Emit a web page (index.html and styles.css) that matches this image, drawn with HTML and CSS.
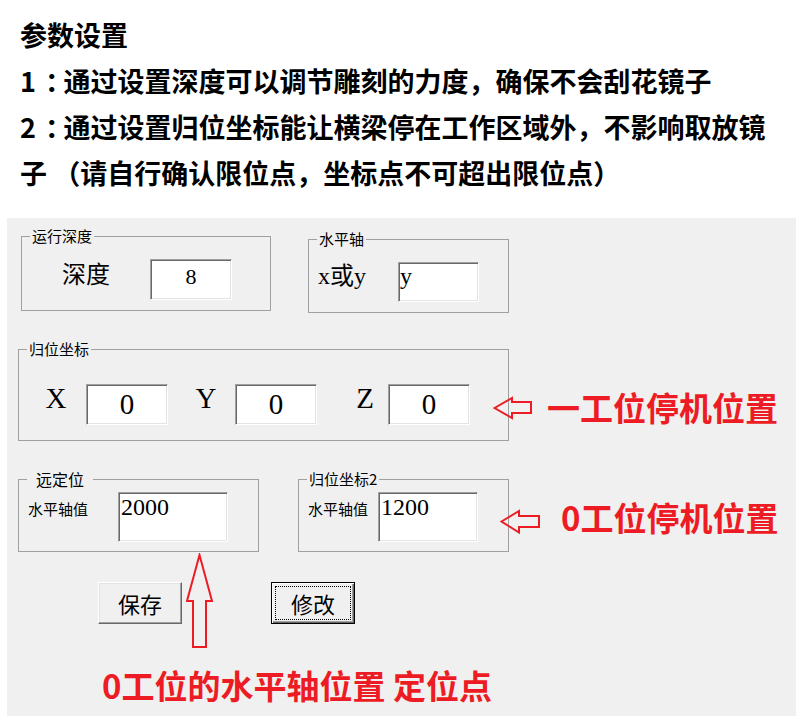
FILE: index.html
```html
<!DOCTYPE html>
<html lang="zh-CN">
<head>
<meta charset="utf-8">
<title>参数设置</title>
<link rel="stylesheet" href="styles.css">
</head>
<body>
<header class="intro">
  <h1 class="intro-line">参数设置</h1>
  <p class="intro-line">1<span class="punct">：</span>通过设置深度可以调节雕刻的力度，确保不会刮花镜子</p>
  <p class="intro-line">2<span class="punct">：</span>通过设置归位坐标能让横梁停在工作区域外，不影响取放镜<br>子 （请自行确认限位点，坐标点不可超出限位点）</p>
</header>

<main class="panel">
  <div class="row row-1">
    <fieldset class="group g-depth">
      <legend>运行深度</legend>
      <div class="group-body">
        <span class="cap cap-depth">深度</span>
        <div class="field f-depth">8</div>
      </div>
    </fieldset>
    <fieldset class="group g-axis">
      <legend>水平轴</legend>
      <div class="group-body">
        <span class="cap cap-axis"><span class="latin">x</span>或<span class="latin">y</span></span>
        <div class="field f-axis">y</div>
      </div>
    </fieldset>
  </div>

  <div class="row row-2">
    <fieldset class="group g-home">
      <legend>归位坐标</legend>
      <div class="group-body">
        <span class="axis-letter ax-x">X</span>
        <div class="field f-coord">0</div>
        <span class="axis-letter ax-y">Y</span>
        <div class="field f-coord">0</div>
        <span class="axis-letter ax-z">Z</span>
        <div class="field f-coord">0</div>
      </div>
    </fieldset>
    <div class="note note-1">
      <svg class="arrow-left" width="41" height="40" viewBox="0 0 41 40"><polygon points="1.5,21 19,11 19,15 38,15 38,26 19,26 19,31"/></svg>
      <span class="note-text">一工位停机位置</span>
    </div>
  </div>

  <div class="row row-3">
    <fieldset class="group g-far">
      <legend>远定位</legend>
      <div class="group-body">
        <span class="small-cap cap-far">水平轴值</span>
        <div class="field f-long f-far">2000</div>
      </div>
    </fieldset>
    <fieldset class="group g-home2">
      <legend>归位坐标2</legend>
      <div class="group-body">
        <span class="small-cap cap-home2">水平轴值</span>
        <div class="field f-long f-home2">1200</div>
      </div>
    </fieldset>
    <div class="note note-2">
      <svg class="arrow-left" width="41" height="40" viewBox="0 0 41 40"><polygon points="1.5,24.5 19,14 19,19 39,19 39,30 19,30 19,35.5"/></svg>
      <span class="note-text">0工位停机位置</span>
    </div>
  </div>

  <div class="row row-4">
    <button class="btn btn-save" type="button">保存</button>
    <button class="btn btn-edit" type="button">修改</button>
  </div>

  <div class="row row-5">
    <span class="caption">0工位的水平轴位置 定位点</span>
  </div>

  <svg class="arrow-up" width="28" height="96" viewBox="0 0 28 96"><polygon points="13.5,2 26,48 20,48 20,94 7,94 7,48 1,48"/></svg>
</main>
</body>
</html>
```

FILE: styles.css
```css
* { box-sizing: border-box; }
html, body { margin: 0; padding: 0; background: #fff; }
body {
  width: 796px;
  height: 716px;
  overflow: hidden;
  font-family: "Noto Sans CJK SC", "Noto Sans", sans-serif;
  color: #000;
}

.intro { padding: 12px 0 0 20px; }
.intro-line {
  margin: 0;
  font-size: 27px;
  line-height: 46px;
  font-weight: 700;
}
.punct {
  font-feature-settings: "halt" 1;
  padding: 0 5px 0 9px;
}

.panel {
  position: relative;
  margin: 22px 0 0 7px;
  height: 498px;
  padding-top: 10px;
  background: #f0f0f0;
}

.row { display: flex; align-items: flex-start; }
.row-2 { margin-top: 28px; }
.row-3 { margin-top: 30px; }
.row-4 { margin-top: 30px; }
.row-5 { margin-top: 41px; }

/* group boxes */
.group {
  margin: 0;
  padding: 0;
  min-width: 0;
  border: 1px solid #a0a0a0;
}
.group legend {
  margin-left: 8px;
  padding: 0 2px;
  font-size: 15px;
  line-height: 16px;
}
.group-body { display: flex; align-items: flex-start; }

/* sunken edit fields */
.field {
  background: #fff;
  border: 1px solid;
  border-color: #a0a0a0 #fff #fff #a0a0a0;
  box-shadow: inset 1px 1px 0 #696969, inset -1px -1px 0 #e3e3e3;
  font-family: "Liberation Serif", serif;
  color: #000;
}

.cap { font-size: 24px; line-height: 30px; }
.latin { font-family: "Liberation Serif", serif; }

/* 运行深度 */
.g-depth { width: 250px; margin-left: 14px; }
.g-depth .group-body { padding: 15px 0 10px 40px; }
.cap-depth { margin: -1px 40px 0 0; }
.f-depth {
  width: 82px;
  height: 41px;
  display: flex;
  align-items: center;
  justify-content: center;
  padding-bottom: 6px;
  font-size: 22px;
  line-height: 22px;
}

/* 水平轴 */
.g-axis { width: 201px; margin: 3px 0 0 37px; }
.g-axis .group-body { padding: 15px 0 10px 9px; }
.cap-axis { margin: -3px 32px 0 0; }
.f-axis {
  width: 81px;
  height: 40px;
  padding: 1px 0 0 1px;
  font-size: 24px;
  line-height: 24px;
}

/* 归位坐标 */
.g-home { width: 491px; margin-left: 11px; }
.g-home .group-body { padding: 27px 0 15px 0; }
.axis-letter {
  width: 30px;
  text-align: center;
  font-family: "Liberation Serif", serif;
  font-size: 29px;
  line-height: 29px;
}
.ax-x { margin: 0 15px 0 22px; }
.ax-y { margin: 0 14px 0 23px; }
.ax-z { margin: 0 8px 0 33px; }
.f-coord {
  width: 82px;
  height: 41px;
  display: flex;
  align-items: center;
  justify-content: center;
  font-size: 29px;
  line-height: 29px;
}

/* 远定位 / 归位坐标2 */
.g-far { width: 241px; margin-left: 11px; }
.g-far legend { padding: 0 9px; font-size: 16px; }
.g-home2 { width: 211px; margin-left: 39px; }
.g-far .group-body,
.g-home2 .group-body { padding: 5px 0 9px 9px; }
.small-cap {
  margin-top: 7px;
  font-size: 15px;
  line-height: 20px;
}
.cap-far { margin-right: 30px; }
.cap-home2 { margin-right: 10px; }
.f-long {
  height: 50px;
  padding: 2px 2px 0 2px;
  font-size: 24px;
  line-height: 24px;
}
.f-far { width: 110px; }
.f-home2 { width: 100px; }

/* red annotations */
.note { display: flex; align-items: center; }
.note-1 { margin: 46px 0 0 -16px; }
.note-2 { margin: 26px 0 0 -9px; }
.arrow-left,
.arrow-up {
  fill: none;
  stroke: #ed1c24;
  stroke-width: 2;
  stroke-linejoin: miter;
}
.arrow-left { flex: none; display: block; }
.note-1 .note-text { margin-left: 13px; }
.note-2 .note-text { margin-left: 20px; }
.note-text,
.caption {
  color: #ed1c24;
  font-size: 33px;
  line-height: 40px;
  font-weight: 700;
  white-space: nowrap;
}
.caption { margin-left: 95px; }
.arrow-up { position: absolute; left: 179px; top: 335px; }

/* buttons */
.btn {
  width: 84px;
  height: 42px;
  padding: 0;
  background: #f0f0f0;
  font-family: "Noto Sans CJK SC", sans-serif;
  font-size: 22px;
  line-height: 22px;
  color: #000;
  border: 1px solid;
  border-color: #fff #696969 #696969 #fff;
  box-shadow: inset -1px -1px 0 #a0a0a0, inset 1px 1px 0 #e3e3e3;
}
.btn-save { margin-left: 91px; }
.btn-edit {
  margin-left: 89px;
  border-color: #000;
  box-shadow: inset 1px 1px 0 #fff, inset -1px -1px 0 #696969, inset -2px -2px 0 #a0a0a0;
  outline: 1px dotted #000;
  outline-offset: -5px;
}
```
